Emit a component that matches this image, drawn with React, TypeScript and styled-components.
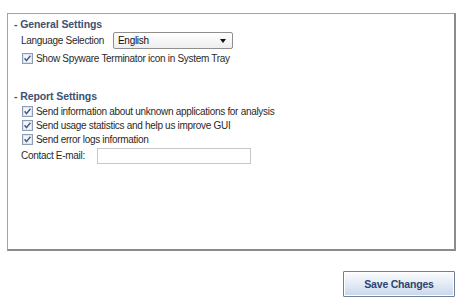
import styled, { createGlobalStyle } from 'styled-components';

const GlobalStyle = createGlobalStyle`
  body {
    margin: 0;
    background: #fff;
    font-family: 'Liberation Sans', Arial, sans-serif;
  }
`;

const Check = () => (
  <svg width="11" height="11" viewBox="0 0 11 11">
    <rect x="0.5" y="0.5" width="10" height="10" fill="#f4f6f9" stroke="#8d9db4" />
    <rect x="1.5" y="1.5" width="8" height="8" fill="none" stroke="#dfe5ee" />
    <path d="M2.6 5.2 L4.5 7.6 L8.4 2.8" fill="none" stroke="#3c5a8a" strokeWidth="1.5" />
  </svg>
);

const Option = ({ label }: { label: string }) => (
  <CheckRow>
    <Check />
    <span>{label}</span>
  </CheckRow>
);

export default function App() {
  return (
    <>
      <GlobalStyle />
      <Page>
        <Panel>
          <Header>- General Settings</Header>
          <FieldRow>
            <Label $width={92}>Language Selection</Label>
            <Select>
              <span>English</span>
              <Arrow />
            </Select>
          </FieldRow>
          <Option label="Show Spyware Terminator icon in System Tray" />

          <Header $gap={25}>- Report Settings</Header>
          <Option label="Send information about unknown applications for analysis" />
          <Option label="Send usage statistics and help us improve GUI" />
          <Option label="Send error logs information" />
          <FieldRow $top={1}>
            <Label $width={76}>Contact E-mail:</Label>
            <TextBox />
          </FieldRow>
        </Panel>
        <Footer>
          <SaveButton>Save Changes</SaveButton>
        </Footer>
      </Page>
    </>
  );
}

const Page = styled.div`
  width: 465px;
  height: 307px;
  padding: 13px 10px 0 7px;
  box-sizing: border-box;
  display: flex;
  flex-direction: column;
`;

const Panel = styled.div`
  width: 449px;
  height: 238px;
  box-sizing: border-box;
  border: 1px solid #a3a3a3;
  border-right: 2px solid #8c8c8c;
  border-bottom: 2px solid #8c8c8c;
  padding: 4px 0 0 6px;
  display: flex;
  flex-direction: column;
  font-size: 10px;
  letter-spacing: -0.3px;
  color: #2a2a2a;
  white-space: nowrap;
`;

const Header = styled.div<{ $gap?: number }>`
  margin: ${(p) => p.$gap ?? 0}px 0 1px;
  font-weight: bold;
  font-size: 10.5px;
  letter-spacing: -0.1px;
  color: #3d5273;
  line-height: 13px;
`;

const FieldRow = styled.div<{ $top?: number }>`
  display: flex;
  align-items: center;
  height: 17px;
  margin: ${(p) => p.$top ?? 0}px 0 2px 7px;
`;

const Label = styled.span<{ $width: number }>`
  width: ${(p) => p.$width}px;
  flex-shrink: 0;
`;

const Select = styled.div`
  width: 120px;
  height: 17px;
  box-sizing: border-box;
  border: 1px solid #8f8f8f;
  border-radius: 2px;
  background: linear-gradient(#ffffff, #eeeeee);
  display: flex;
  align-items: center;
  justify-content: space-between;
  padding: 0 6px 0 4px;
  color: #111;
`;

const Arrow = styled.span`
  width: 0;
  height: 0;
  border-left: 3px solid transparent;
  border-right: 3px solid transparent;
  border-top: 4px solid #111;
`;

const CheckRow = styled.div`
  display: flex;
  align-items: center;
  gap: 3px;
  height: 14px;
  margin-left: 8px;
`;

const TextBox = styled.div`
  width: 154px;
  height: 16px;
  box-sizing: border-box;
  border: 1px solid #c8c8c8;
  background: #fff;
`;

const Footer = styled.div`
  display: flex;
  justify-content: flex-end;
  padding-top: 20px;
`;

const SaveButton = styled.button`
  width: 112px;
  height: 26px;
  border: 1px solid #6f7f99;
  border-radius: 1px;
  background: linear-gradient(#fbfcfe 0%, #e6edf7 45%, #c9d6ea 100%);
  box-shadow: inset 0 0 0 1px #ffffff;
  font-family: 'Liberation Sans', Arial, sans-serif;
  font-size: 10.5px;
  letter-spacing: -0.2px;
  font-weight: bold;
  color: #2c4470;
  padding: 0;
`;
